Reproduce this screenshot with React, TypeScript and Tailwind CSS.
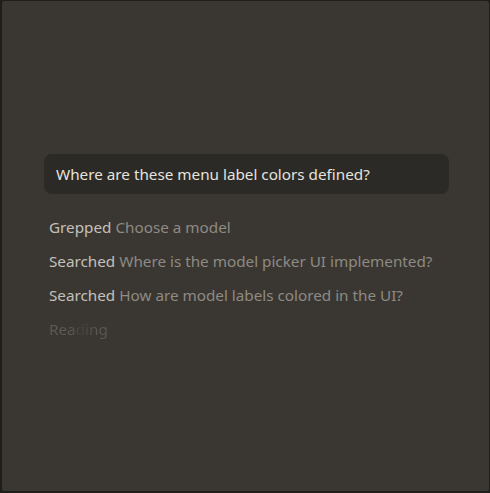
export default function App() {
  const steps = [
    { verb: "Grepped", detail: "Choose a model" },
    { verb: "Searched", detail: "Where is the model picker UI implemented?" },
    { verb: "Searched", detail: "How are model labels colored in the UI?" },
  ];
  return (
    <div
      className="h-[493px] w-[490px] bg-[#1f1e1b]"
      style={{ fontFamily: '"Noto Sans", "Open Sans", sans-serif' }}
    >
      <div className="h-full w-full border-t border-l-2 border-b-2 border-r border-[#1f1e1b] rounded-[4px] bg-[#3a3732] pl-[42px] pr-[40px] pt-[153px]">
        <div className="flex h-10 items-center rounded-lg bg-[#2b2a26] px-3 text-[15.25px] text-[#e6e3de]">
          Where are these menu label colors defined?
        </div>
        <div className="mt-[22px] flex flex-col gap-[12px] px-[5px] text-[15.25px] leading-[22px]">
          {steps.map((s, i) => (
            <div key={i}>
              <span className="text-[#c4c1bb]">{s.verb}</span>{" "}
              <span className="text-[#8e8a84]">{s.detail}</span>
            </div>
          ))}
          <div>
            <span className="bg-[linear-gradient(90deg,#5c5852_0px,#5c5852_22px,#423e39_32px,#5a5650_46px)] bg-clip-text text-transparent">
              Reading
            </span>
          </div>
        </div>
      </div>
    </div>
  );
}
